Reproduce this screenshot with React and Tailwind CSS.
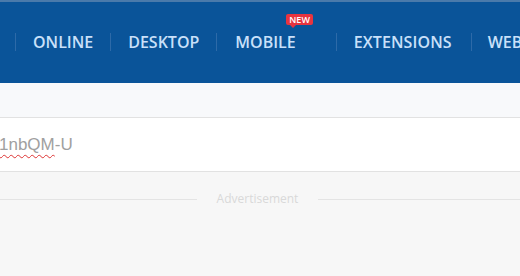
export default function App() {
  const sep = <div className="w-px h-[18px] bg-[#2d6aa8]" />;
  return (
    <div className="w-[520px] h-[276px] overflow-hidden bg-[#f7f7f7]" style={{ fontFamily: '"Open Sans", sans-serif' }}>
      <div className="h-[83px] bg-[#0a5499] border-t-2 border-[#4a7aab] flex items-center">
        <div className="flex items-center whitespace-nowrap text-[16px] font-semibold text-[#c9e0f9] -ml-[1px] -mt-[1px]">
          <div className="w-[17px] flex justify-end">{sep}</div>
          <div className="pl-[17px] pr-[17px]">ONLINE</div>
          {sep}
          <div className="pl-[17px] pr-[17px]">DESKTOP</div>
          {sep}
          <div className="relative pl-[18px] pr-[40px]">
            MOBILE
            <span className="absolute left-[69px] -top-[16px] bg-[#e8343f] text-white text-[9px] font-semibold leading-[11px] px-[3px] rounded-[2px]">
              NEW
              <span className="absolute left-[4px] -bottom-[3px] w-0 h-0 border-l-[3px] border-r-[3px] border-t-[3px] border-l-transparent border-r-transparent border-t-[#e8343f]" />
            </span>
          </div>
          {sep}
          <div className="pl-[17px] pr-[19px] tracking-[0.1px]">EXTENSIONS</div>
          {sep}
          <div className="pl-[16px]">WEBSITE</div>
        </div>
      </div>
      <div className="h-[34px] bg-[#f8f9fb]" />
      <div className="h-[55px] bg-white border-y border-[#e2e2e2] flex items-center">
        <div className="text-[17px] text-[#a0a0a0] whitespace-nowrap -ml-[1px] mt-[1px]" style={{ fontFamily: '"Liberation Sans", Arial, sans-serif' }}>
          <span className="underline decoration-wavy decoration-[#d33] decoration-1 underline-offset-[4px]">1nbQM</span>-U
        </div>
      </div>
      <div className="flex items-center mt-[18px]">
        <div className="w-[197px] h-px bg-[#e4e4e4]" />
        <div className="w-[121px] text-center text-[12px] text-[#d9d9d9]" style={{ fontFamily: '"Open Sans", sans-serif' }}>Advertisement</div>
        <div className="flex-1 h-px bg-[#e4e4e4]" />
      </div>
    </div>
  );
}
